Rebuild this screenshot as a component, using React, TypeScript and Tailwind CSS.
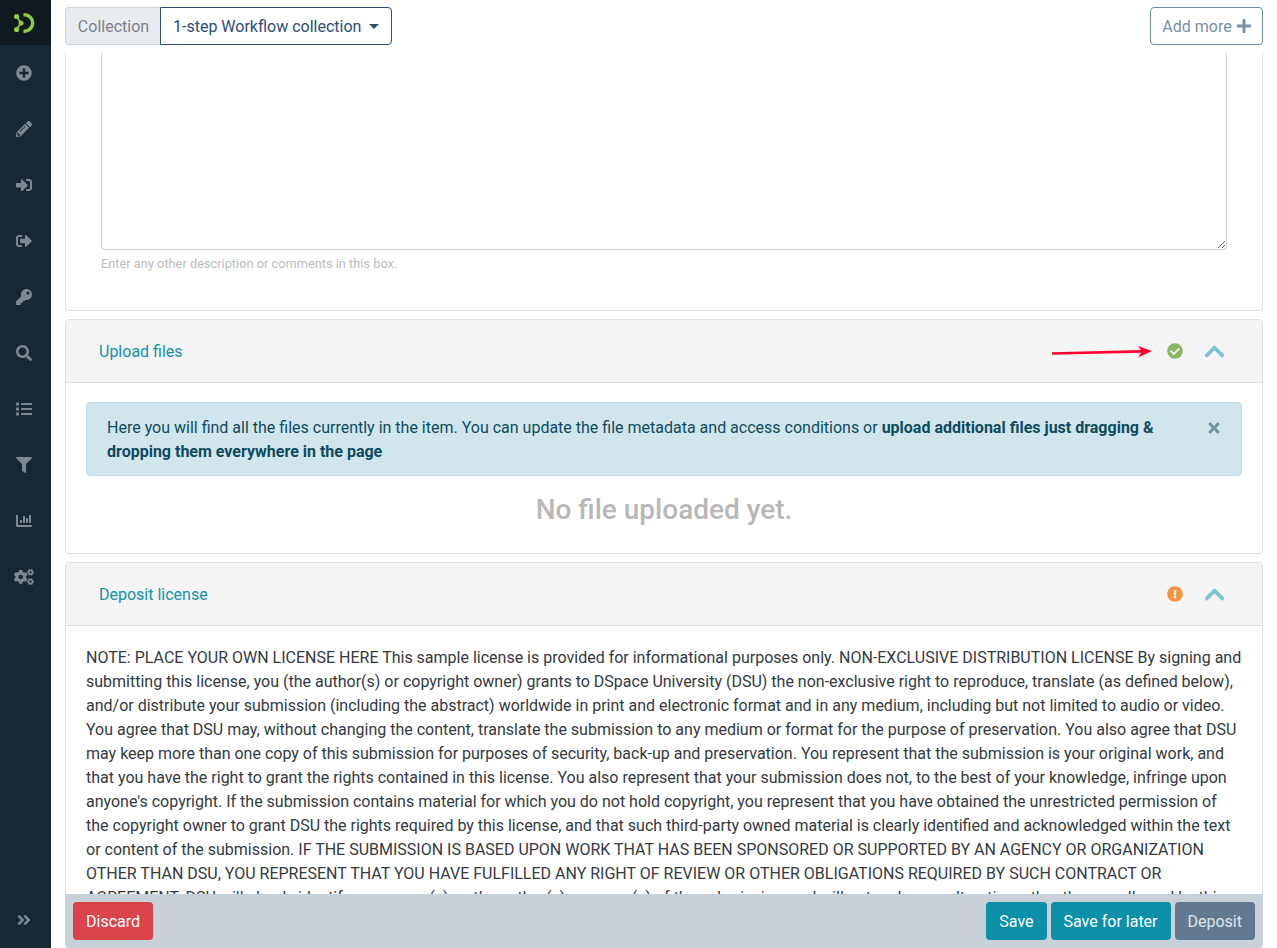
import { FaPlusCircle, FaPencilAlt, FaSignInAlt, FaSignOutAlt, FaKey, FaSearch, FaList, FaFilter, FaChartBar, FaCogs, FaAngleDoubleRight, FaCheckCircle, FaExclamationCircle, FaChevronUp, FaTimes, FaPlus } from "react-icons/fa";

const navIcons = [FaPlusCircle, FaPencilAlt, FaSignInAlt, FaSignOutAlt, FaKey, FaSearch, FaList, FaFilter, FaChartBar];

function Logo() {
  return (
    <svg width="21" height="20" viewBox="0 0 21 20" fill="none">
      <path d="M9.5 1.8 H10.5 a8.2 8.2 0 0 1 0 16.4 H9.5" stroke="#8fca45" strokeWidth="3.4" />
      <path d="M2.6 3.5 L7 10 L2.6 16.5" stroke="#8fca45" strokeWidth="1.8" />
      <circle cx="2.6" cy="3.5" r="2.6" fill="#8fca45" />
      <circle cx="2.6" cy="16.5" r="2.6" fill="#8fca45" />
      <circle cx="7" cy="10" r="2.5" fill="#8fca45" />
    </svg>
  );
}

function Sidebar() {
  return (
    <aside className="w-[51px] h-full bg-[#172734] flex flex-col shrink-0">
      <div className="h-[45px] bg-[#10191f] flex items-center justify-center shrink-0 pr-[2px]">
        <Logo />
      </div>
      <nav className="flex flex-col w-[48px]">
        {navIcons.map((Icon, i) => (
          <div key={i} className="h-[56px] flex items-center justify-center text-[#7f8890] text-[16px]">
            <Icon />
          </div>
        ))}
        <div className="h-[56px] flex items-center justify-center text-[#7f8890] text-[20px]">
          <FaCogs />
        </div>
      </nav>
      <div className="mt-auto h-[56px] w-[48px] flex items-center justify-center text-[#7f8890] text-[16px]">
        <FaAngleDoubleRight />
      </div>
    </aside>
  );
}

function CardHeader({ title, status }: { title: string; status: React.ReactNode }) {
  return (
    <div className="relative h-[63px] bg-[#f5f5f5] border-b border-[#dfdfdf] flex items-center pl-[33px] pr-[36px]">
      <span className="text-[#1391a9] pt-[2px]">{title}</span>
      <div className="ml-auto flex items-center gap-[20px]">
        {status}
        <FaChevronUp className="text-[23px] text-[#7cc3d3]" />
      </div>
    </div>
  );
}

const license = "NOTE: PLACE YOUR OWN LICENSE HERE This sample license is provided for informational purposes only. NON-EXCLUSIVE DISTRIBUTION LICENSE By signing and submitting this license, you (the author(s) or copyright owner) grants to DSpace University (DSU) the non-exclusive right to reproduce, translate (as defined below), and/or distribute your submission (including the abstract) worldwide in print and electronic format and in any medium, including but not limited to audio or video. You agree that DSU may, without changing the content, translate the submission to any medium or format for the purpose of preservation. You also agree that DSU may keep more than one copy of this submission for purposes of security, back-up and preservation. You represent that the submission is your original work, and that you have the right to grant the rights contained in this license. You also represent that your submission does not, to the best of your knowledge, infringe upon anyone's copyright. If the submission contains material for which you do not hold copyright, you represent that you have obtained the unrestricted permission of the copyright owner to grant DSU the rights required by this license, and that such third-party owned material is clearly identified and acknowledged within the text or content of the submission. IF THE SUBMISSION IS BASED UPON WORK THAT HAS BEEN SPONSORED OR SUPPORTED BY AN AGENCY OR ORGANIZATION OTHER THAN DSU, YOU REPRESENT THAT YOU HAVE FULFILLED ANY RIGHT OF REVIEW OR OTHER OBLIGATIONS REQUIRED BY SUCH CONTRACT OR AGREEMENT. DSU will clearly identify your name(s) as the author(s) or owner(s) of the submission, and will not make any alteration, other than as allowed by this license, to your submission.";

export default function App() {
  return (
    <div className="h-[948px] w-[1277px] flex overflow-hidden bg-white text-[16px] leading-[24px] text-[#343a40] font-['Roboto',sans-serif]">
      <Sidebar />
      <main className="w-[1198px] ml-[14px] h-full flex flex-col">
        <div className="h-[53px] shrink-0 bg-white flex items-start pt-[7px]">
          <div className="flex h-[38px]">
            <span className="w-[95px] pt-[2px] pl-[1px] bg-[#e9ecef] border border-[#ced4da] border-r-0 rounded-l-[4px] flex items-center justify-center text-[#7a8289]">Collection</span>
            <button className="w-[232px] pt-[2px] border border-[#2b4e72] rounded-r-[4px] flex items-center pl-[12px] text-[#2b4e72] bg-white">
              1-step Workflow collection
              <span className="ml-[8px] mb-[2px] w-0 h-0 border-x-[5px] border-x-transparent border-t-[5px] border-t-[#2b4e72]" />
            </button>
          </div>
          <button className="ml-auto w-[113px] h-[38px] pt-[2px] pl-[1px] border border-[#6f8ba5] rounded-[4px] flex items-center justify-center gap-[4px] text-[#7891a9] bg-white">
            Add more
            <FaPlus className="text-[16px] mb-[2px]" />
          </button>
        </div>

        <div className="flex-1 min-h-0 overflow-hidden flex flex-col gap-[8px]">
          <section className="h-[258px] shrink-0 bg-white border border-t-0 border-[#dfdfdf] rounded-b-[4px] px-[35px]">
            <textarea className="block w-full h-[197px] border border-t-0 border-[#ced4da] rounded-b-[4px] bg-white outline-none" />
            <p className="mt-[4px] text-[12.8px] leading-[19px] text-[#bdbdbd]">Enter any other description or comments in this box.</p>
          </section>

          <section className="h-[235px] shrink-0 bg-white border border-[#dfdfdf] rounded-[4px] overflow-hidden">
            <div className="relative">
              <CardHeader title="Upload files" status={<FaCheckCircle className="text-[16px] text-[#8ab661]" />} />
              <svg className="absolute left-[986px] top-[24px]" width="102" height="15" viewBox="0 0 102 15" fill="none">
                <path d="M0 9.5 L90 7.4" stroke="#ff0033" strokeWidth="2.6" />
                <path d="M86 2 L100 7 L86 13.5 L90 7.4 Z" fill="#ff0033" />
              </svg>
            </div>
            <div className="px-[20px] pt-[19px]">
              <div className="relative h-[74px] bg-[#d1e6ec] border border-[#bfdde6] rounded-[4px] pl-[20px] pr-[60px] pt-[13px] text-[#0e4b5e]">
                Here you will find all the files currently in the item. You can update the file metadata and access conditions or <b className="font-bold">upload additional files just dragging &amp; dropping them everywhere in the page</b>
                <FaTimes className="absolute right-[19px] top-[17px] text-[16px] text-[#6d939f]" />
              </div>
              <h3 className="mt-[17px] text-center text-[28px] leading-[34px] font-medium text-[#b8b8b8]">No file uploaded yet.</h3>
            </div>
          </section>

          <section className="shrink-0 bg-white border border-[#dfdfdf] border-b-0 rounded-t-[4px]">
            <CardHeader title="Deposit license" status={<FaExclamationCircle className="text-[16px] text-[#f49440]" />} />
            <p className="px-[20px] pt-[20px] text-[#343a40]">{license}</p>
          </section>
        </div>

        <div className="h-[54px] shrink-0 bg-[#c9d1d8] flex items-center px-[8px] rounded-b-[4px]">
          <button className="h-[38px] px-[13px] pt-[2px] bg-[#d9444a] text-white rounded-[4px]">Discard</button>
          <div className="ml-auto flex gap-[4px]">
            <button className="h-[38px] px-[13px] pt-[2px] bg-[#0c8fa8] text-white rounded-[4px]">Save</button>
            <button className="h-[38px] px-[13px] pt-[2px] bg-[#0c8fa8] text-white rounded-[4px]">Save for later</button>
            <button className="h-[38px] px-[13px] pt-[2px] bg-[#627a91] text-[#dde3e8] rounded-[4px]">Deposit</button>
          </div>
        </div>
      </main>
    </div>
  );
}
